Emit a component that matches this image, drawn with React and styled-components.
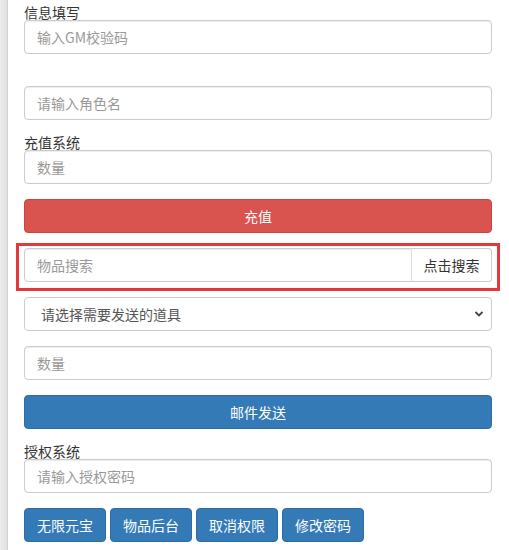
import React from 'react';
import styled, { createGlobalStyle } from 'styled-components';

const GlobalStyle = createGlobalStyle`
  html, body {
    margin: 0;
    padding: 0;
    background: #fff;
  }
  body {
    font-family: "Liberation Sans", "Noto Sans CJK SC", sans-serif;
    font-size: 14px;
    color: #333;
  }
  * { box-sizing: border-box; }
`;

const Page = styled.div`
  display: flex;
  min-height: 550px;
`;

const SideEdge = styled.div`
  width: 8px;
  flex: none;
  background: linear-gradient(to right, #ececec 0%, #e2e2e2 80%, #c9c9c9 100%);
`;

const Form = styled.div`
  width: 468px;
  margin-left: 16px;
  padding-top: 5px;
  display: flex;
  flex-direction: column;
`;

const Group = styled.div`
  display: flex;
  flex-direction: column;
  margin-bottom: 15px;
`;

const Label = styled.label`
  display: block;
  flex: none;
  height: ${(p) => (p.$empty ? 17 : 15)}px;
  line-height: 15px;
  font-size: 14px;
  color: #333;
  font-family: "Noto Sans CJK SC", sans-serif;
  overflow: visible;
  white-space: nowrap;
`;

const Input = styled.input`
  display: block;
  flex: none;
  width: 100%;
  height: 34px;
  margin: 0;
  padding: 6px 12px;
  font-size: 14px;
  font-family: "Noto Sans CJK SC", sans-serif;
  color: #555;
  background: #fff;
  border: 1px solid #ccc;
  border-radius: 4px;
  box-shadow: inset 0 1px 1px rgba(0, 0, 0, 0.075);
  outline: none;
  &::placeholder {
    color: #999;
  }
`;

const Button = styled.button`
  display: block;
  flex: none;
  width: ${(p) => (p.$block ? '100%' : 'auto')};
  height: 34px;
  margin: 0;
  padding: 0 12px;
  font-size: 14px;
  line-height: 32px;
  white-space: nowrap;
  font-family: "Noto Sans CJK SC", sans-serif;
  color: #fff;
  background: ${(p) => (p.$danger ? '#d9534f' : '#337ab7')};
  border: 1px solid ${(p) => (p.$danger ? '#d43f3a' : '#2e6da4')};
  border-radius: 4px;
  cursor: pointer;
`;

const Highlight = styled.div`
  margin: -5px -8px 6px -8px;
  padding: 2px 5px 6px 5px;
  border: 3px solid #e5363b;
`;

const InputGroup = styled.div`
  display: flex;
  height: 34px;
`;

const GroupInput = styled(Input)`
  flex: 1;
  width: auto;
  min-width: 0;
  border-radius: 4px 0 0 4px;
`;

const Addon = styled.button`
  flex: none;
  width: 81px;
  height: 34px;
  margin: 0;
  padding: 0;
  font-size: 14px;
  line-height: 32px;
  white-space: nowrap;
  font-family: "Noto Sans CJK SC", sans-serif;
  color: #333;
  background: #fff;
  border: 1px solid #ccc;
  border-left: 1px solid #ddd;
  border-radius: 0 4px 4px 0;
  margin-left: -1px;
`;

const SelectWrap = styled.div`
  position: relative;
  height: 34px;
`;

const Select = styled.select`
  appearance: none;
  display: block;
  width: 100%;
  height: 34px;
  margin: 0;
  padding: 0 12px 0 16px;
  font-size: 14px;
  font-family: "Noto Sans CJK SC", sans-serif;
  color: #555;
  background: #fff;
  border: 1px solid #ccc;
  border-radius: 4px;
  outline: none;
`;

const Chevron = styled.svg`
  position: absolute;
  right: 8px;
  top: 13px;
  pointer-events: none;
`;

const ButtonRow = styled.div`
  display: flex;
  gap: 4px;
`;

export default function App() {
  return (
    <>
      <GlobalStyle />
      <Page>
        <SideEdge />
        <Form>
          <Group>
            <Label>信息填写</Label>
            <Input placeholder="输入GM校验码" />
          </Group>
          <Group>
            <Label $empty />
            <Input placeholder="请输入角色名" />
          </Group>
          <Group>
            <Label>充值系统</Label>
            <Input placeholder="数量" />
          </Group>
          <Group>
            <Button $block $danger>充值</Button>
          </Group>
          <Highlight>
            <InputGroup>
              <GroupInput placeholder="物品搜索" />
              <Addon>点击搜索</Addon>
            </InputGroup>
          </Highlight>
          <Group>
            <SelectWrap>
              <Select defaultValue="">
                <option value="">请选择需要发送的道具</option>
              </Select>
              <Chevron width="10" height="8" viewBox="0 0 10 8">
                <path d="M1.5 2 L5 5.5 L8.5 2" fill="none" stroke="#444" strokeWidth="1.8" />
              </Chevron>
            </SelectWrap>
          </Group>
          <Group>
            <Input placeholder="数量" />
          </Group>
          <Group>
            <Button $block>邮件发送</Button>
          </Group>
          <Group>
            <Label>授权系统</Label>
            <Input placeholder="请输入授权密码" />
          </Group>
          <ButtonRow>
            <Button>无限元宝</Button>
            <Button>物品后台</Button>
            <Button>取消权限</Button>
            <Button>修改密码</Button>
          </ButtonRow>
        </Form>
      </Page>
    </>
  );
}
